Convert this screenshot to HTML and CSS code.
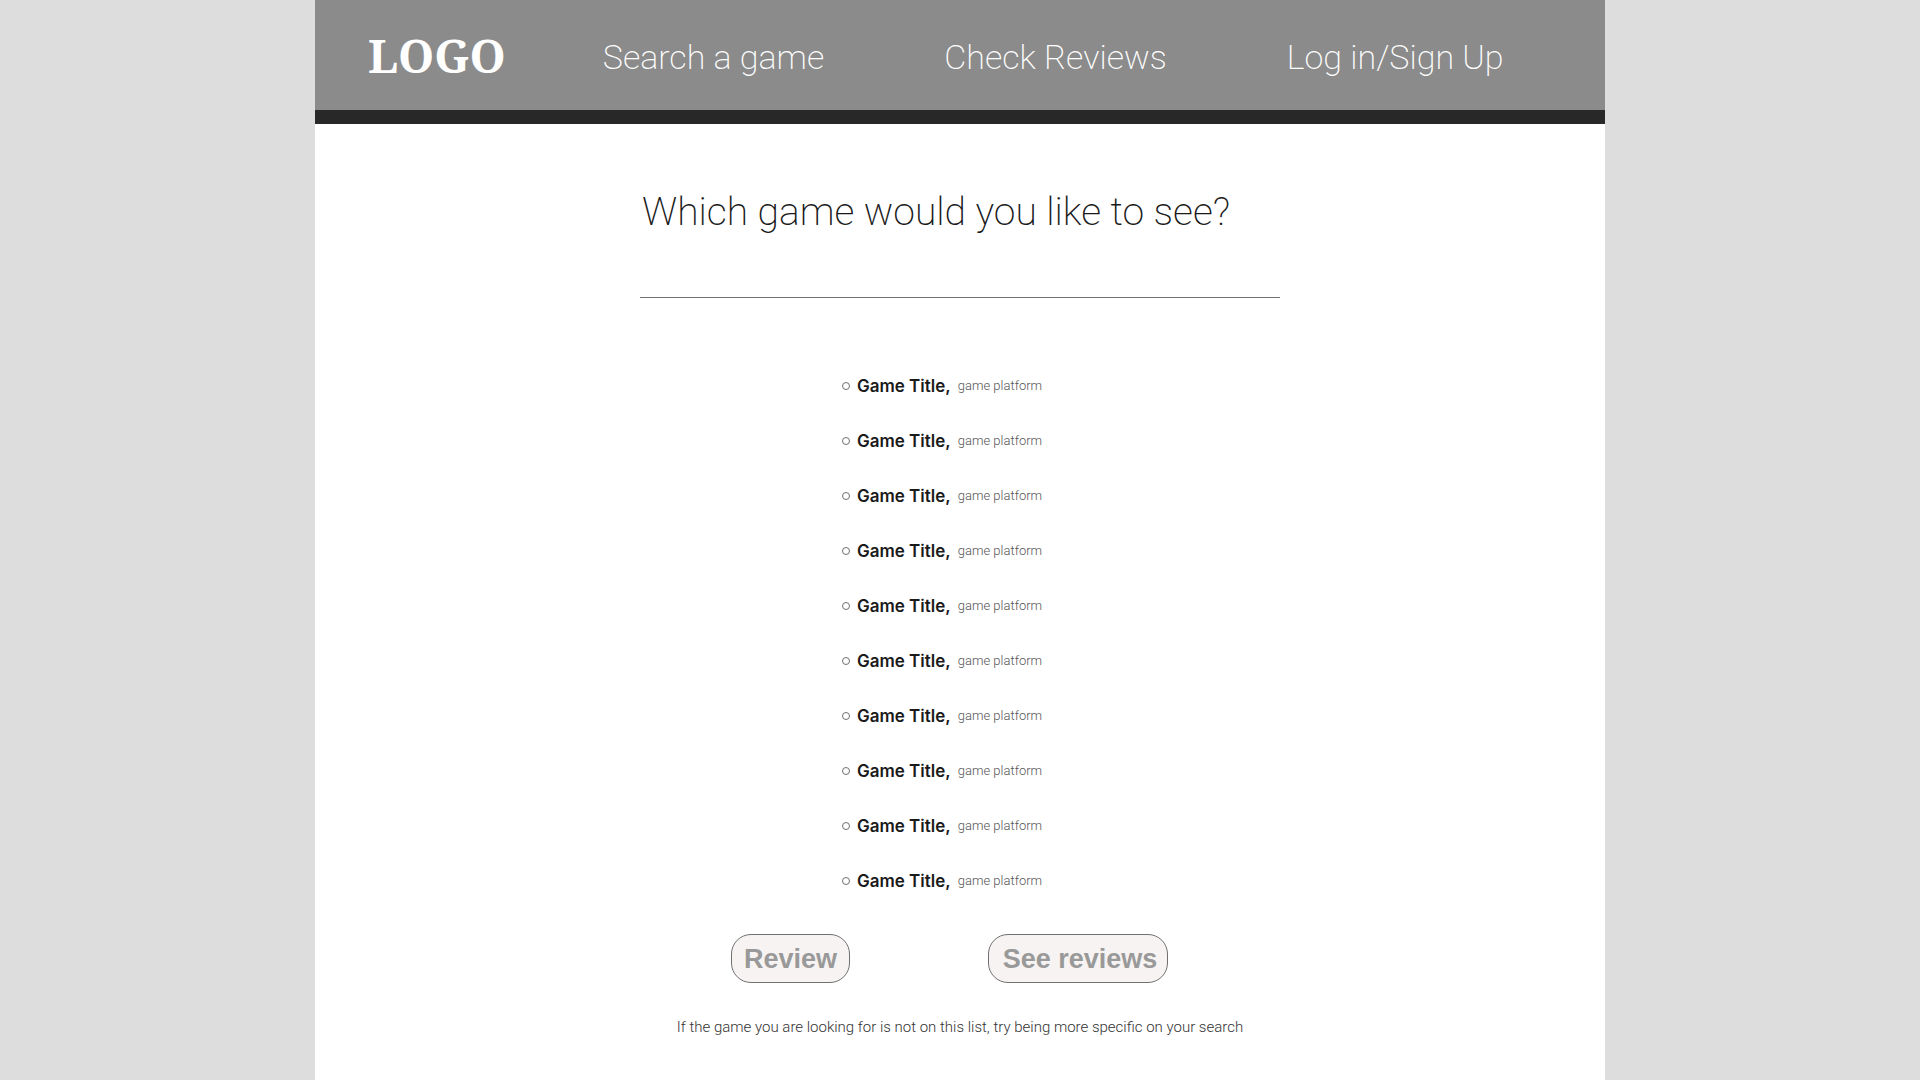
FILE: index.html
```
<!DOCTYPE html>
<html lang="en">
<head>
<meta charset="utf-8">
<meta name="viewport" content="width=device-width, initial-scale=1">
<title>Search results</title>
<link rel="stylesheet" href="styles.css">
</head>
<body>
<div class="page">
  <header class="site-header">
    <a class="logo" href="#">LOGO</a>
    <nav class="site-nav">
      <a href="#">Search a game</a>
      <a href="#">Check Reviews</a>
      <a href="#">Log in/Sign Up</a>
    </nav>
  </header>
  <main>
    <form class="picker">
      <h1 class="question">Which game would you like to see?</h1>
      <hr class="rule">
      <ul class="games">
        <li><label class="game"><input type="radio" name="game"><span class="title">Game Title,</span><span class="platform">game platform</span></label></li>
        <li><label class="game"><input type="radio" name="game"><span class="title">Game Title,</span><span class="platform">game platform</span></label></li>
        <li><label class="game"><input type="radio" name="game"><span class="title">Game Title,</span><span class="platform">game platform</span></label></li>
        <li><label class="game"><input type="radio" name="game"><span class="title">Game Title,</span><span class="platform">game platform</span></label></li>
        <li><label class="game"><input type="radio" name="game"><span class="title">Game Title,</span><span class="platform">game platform</span></label></li>
        <li><label class="game"><input type="radio" name="game"><span class="title">Game Title,</span><span class="platform">game platform</span></label></li>
        <li><label class="game"><input type="radio" name="game"><span class="title">Game Title,</span><span class="platform">game platform</span></label></li>
        <li><label class="game"><input type="radio" name="game"><span class="title">Game Title,</span><span class="platform">game platform</span></label></li>
        <li><label class="game"><input type="radio" name="game"><span class="title">Game Title,</span><span class="platform">game platform</span></label></li>
        <li><label class="game"><input type="radio" name="game"><span class="title">Game Title,</span><span class="platform">game platform</span></label></li>
      </ul>
      <div class="actions">
        <button class="action review" type="button">Review</button>
        <button class="action see" type="button">See reviews</button>
      </div>
      <p class="hint">If the game you are looking for is not on this list, try being more specific on your search</p>
    </form>
  </main>
</div>
</body>
</html>
```
FILE: styles.css
```
* { box-sizing: border-box; }

body {
  margin: 0;
  background: #ddd;
  color: #1a1a1a;
  font-family: Roboto, "Liberation Sans", sans-serif;
}

.page {
  width: 67.2%;
  min-height: 100vh;
  margin: 0 auto;
  background: #fff;
}

.site-header {
  display: flex;
  align-items: center;
  gap: 97px;
  min-height: 124px;
  padding: 0 53px;
  background: #8b8b8b;
  border-bottom: 14px solid #282828;
}

.site-header a {
  color: #fff;
  text-decoration: none;
}

.logo {
  font: 700 46px/52px "Noto Serif", "Liberation Serif", serif;
}

.site-nav {
  display: flex;
  flex-wrap: wrap;
  gap: 0 120px;
  padding-top: 4px;
  font-size: 34px;
  line-height: 40px;
  font-weight: 200;
}

.picker {
  max-width: 640px;
  margin: 0 auto;
  padding-top: 64px;
}

.question {
  margin: 0 2px;
  font-size: 39px;
  line-height: 48px;
  font-weight: 200;
}

.rule {
  height: 1px;
  margin: 61px 0 0;
  border: 0;
  background: #707070;
}

.games {
  width: 238px;
  margin: 60px auto 0;
  padding: 0;
  list-style: none;
}

.game {
  display: flex;
  align-items: center;
  height: 55px;
  white-space: nowrap;
}

.game input {
  appearance: none;
  width: 8px;
  height: 8px;
  margin: 0 7px 0 1px;
  border: 1px solid #707070;
  border-radius: 50%;
  background: #fff;
}

.game input:checked { background: #707070; }

.title {
  margin-right: 7px;
  font: 600 17px/24px Inter, sans-serif;
}

.platform {
  font-size: 13px;
  line-height: 24px;
  font-weight: 300;
  color: #555;
}

.actions {
  display: flex;
  justify-content: center;
  gap: 138px;
  padding: 26px 21px 0 0;
}

.action {
  height: 49px;
  padding: 0;
  border: 1px solid #707070;
  border-radius: 20px;
  background: #f7f3f2;
  color: #999;
  font: 700 27px/40px "Liberation Sans", sans-serif;
}

.review { width: 119px; }

.see {
  width: 180px;
  padding-left: 4px;
}

.hint {
  margin: 32px 0 0;
  font-size: 15px;
  line-height: 24px;
  font-weight: 300;
  color: #333;
  text-align: center;
}
```
